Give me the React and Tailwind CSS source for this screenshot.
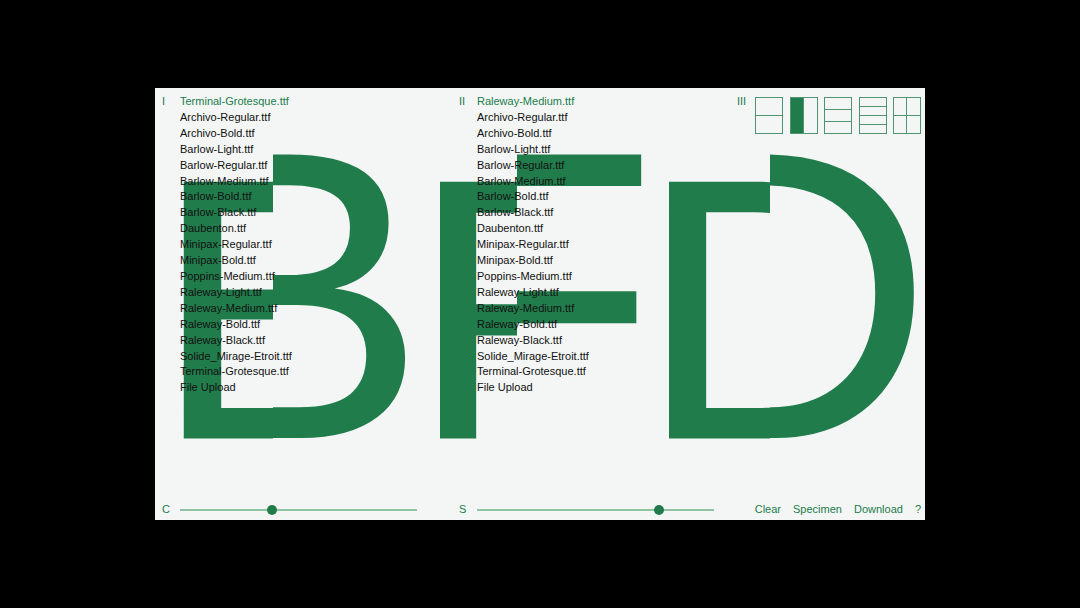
import React from 'react';

const fonts = [
  'Archivo-Regular.ttf',
  'Archivo-Bold.ttf',
  'Barlow-Light.ttf',
  'Barlow-Regular.ttf',
  'Barlow-Medium.ttf',
  'Barlow-Bold.ttf',
  'Barlow-Black.ttf',
  'Daubenton.ttf',
  'Minipax-Regular.ttf',
  'Minipax-Bold.ttf',
  'Poppins-Medium.ttf',
  'Raleway-Light.ttf',
  'Raleway-Medium.ttf',
  'Raleway-Bold.ttf',
  'Raleway-Black.ttf',
  'Solide_Mirage-Etroit.ttf',
  'Terminal-Grotesque.ttf',
  'File Upload',
];

// each glyph: left half set in font I, right half in font II
const letters = [
  { ch: 'B', wrap: 'left-[27px]', cut: 'w-[91px]', rightBox: 'left-[91px]', a: 'left-[-27px]', b: 'left-[-121px]' },
  { ch: 'F', wrap: 'left-[285px]', cut: 'w-[77px]', rightBox: 'left-[77px]', a: 'left-[-30px]', b: 'left-[-111px]' },
  { ch: 'D', wrap: 'left-[514px]', cut: 'w-[101px]', rightBox: 'left-[101px]', a: 'left-[-29px]', b: 'left-[-134px]' },
];

function Letter({ l }) {
  return (
    <div className={`absolute top-0 h-full w-[290px] ${l.wrap}`}>
      <div className={`absolute top-0 left-0 h-full overflow-hidden ${l.cut}`}>
        <span className={`absolute top-[37px] text-[369px] leading-none whitespace-nowrap [-webkit-text-stroke:3px_#217c4b] ${l.a}`}>{l.ch}</span>
      </div>
      <div className={`absolute top-0 right-0 h-full overflow-hidden ${l.rightBox}`}>
        <span className={`absolute top-[1px] text-[412px] leading-none whitespace-nowrap ${l.b}`}>{l.ch}</span>
      </div>
    </div>
  );
}

function FontList({ label, selected }) {
  return (
    <div className="flex">
      <div className="w-[18px] text-[#217c4b]">{label}</div>
      <ul>
        <li className="text-[#217c4b]">{selected}</li>
        {fonts.map((f, i) => (
          <li key={i}>{f}</li>
        ))}
      </ul>
    </div>
  );
}

function Slider({ label, pos }) {
  return (
    <div className="flex items-center">
      <div className="w-[18px] text-[#217c4b]">{label}</div>
      <div className="relative w-[237px] h-[16px] flex items-center">
        <div className="w-full h-[1.5px] bg-[#8fc3a2]" />
        <div className={`absolute w-[10px] h-[10px] rounded-full bg-[#217c4b] -translate-x-1/2 ${pos}`} />
      </div>
    </div>
  );
}

function LayoutIcons() {
  const box = 'w-[28px] h-[37px] border border-[#4f9670] flex';
  return (
    <div className="flex gap-[6.5px] mt-[3px]">
      <div className={`${box} flex-col`}>
        <div className="flex-1 border-b border-[#4f9670]" />
        <div className="flex-1" />
      </div>
      <div className={box}>
        <div className="flex-1 bg-[#217c4b]" />
        <div className="flex-1 border-l border-[#4f9670]" />
      </div>
      <div className={`${box} flex-col`}>
        <div className="flex-1 border-b border-[#4f9670]" />
        <div className="flex-1 border-b border-[#4f9670]" />
        <div className="flex-1" />
      </div>
      <div className={`${box} flex-col`}>
        <div className="flex-1 border-b border-[#4f9670]" />
        <div className="flex-1 border-b border-[#4f9670]" />
        <div className="flex-1 border-b border-[#4f9670]" />
        <div className="flex-1" />
      </div>
      <div className="w-[28px] h-[37px] border border-[#4f9670] grid grid-cols-2 grid-rows-2">
        <div className="border-r border-b border-[#4f9670]" />
        <div className="border-b border-[#4f9670]" />
        <div className="border-r border-[#4f9670]" />
        <div />
      </div>
    </div>
  );
}

export default function App() {
  return (
    <div className="w-[1080px] h-[608px] bg-black flex items-center justify-center">
      <div
        className="relative w-[770px] h-[432px] bg-[#f4f6f5] overflow-hidden text-[11px] leading-[15.9px] text-[#111]"
        style={{ fontFamily: '"Liberation Sans", Arial, sans-serif' }}
      >
        {/* specimen */}
        <div className="absolute inset-0 text-[#217c4b] select-none">
          {letters.map((l) => (
            <Letter key={l.ch} l={l} />
          ))}
        </div>

        <div className="relative h-full flex flex-col justify-between pt-[6px] pb-[2px] pl-[7px] pr-[4px]">
          <div className="flex">
            <div className="w-[297px]">
              <FontList label="I" selected="Terminal-Grotesque.ttf" />
            </div>
            <div className="w-[278px]">
              <FontList label="II" selected="Raleway-Medium.ttf" />
            </div>
            <div className="flex-1 flex">
              <div className="w-[18px] text-[#217c4b]">III</div>
              <LayoutIcons />
            </div>
          </div>

          <div className="flex items-center">
            <div className="w-[297px]">
              <Slider label="C" pos="left-[39%]" />
            </div>
            <div className="w-[278px]">
              <Slider label="S" pos="left-[77%]" />
            </div>
            <div className="flex-1 flex justify-end gap-[12px] text-[#217c4b]">
              <span>Clear</span>
              <span>Specimen</span>
              <span>Download</span>
              <span>?</span>
            </div>
          </div>
        </div>
      </div>
    </div>
  );
}
